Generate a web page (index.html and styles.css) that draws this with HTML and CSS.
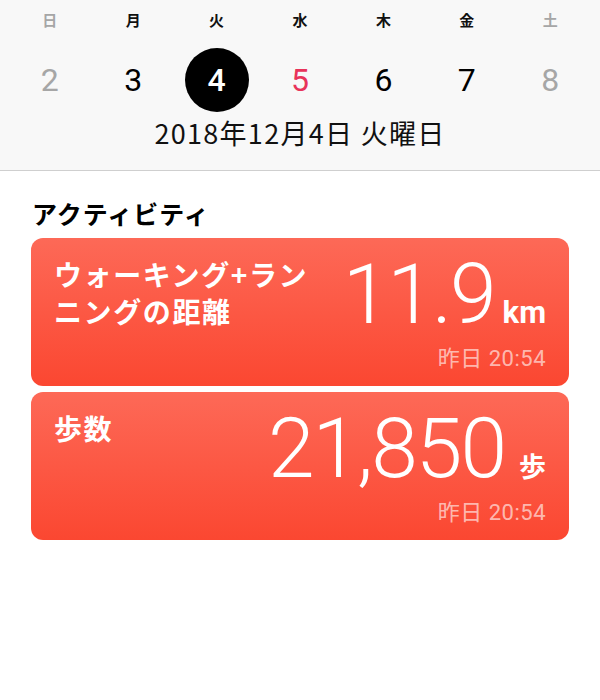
FILE: index.html
```html
<!DOCTYPE html>
<html lang="ja">
<head>
<meta charset="utf-8">
<link rel="stylesheet" href="styles.css">
</head>
<body>
<header class="calendar">
  <div class="week">
    <div class="day off"><span class="dow">日</span><span class="num">2</span></div>
    <div class="day"><span class="dow">月</span><span class="num">3</span></div>
    <div class="day"><span class="dow">火</span><span class="num sel">4</span></div>
    <div class="day"><span class="dow">水</span><span class="num today">5</span></div>
    <div class="day"><span class="dow">木</span><span class="num">6</span></div>
    <div class="day"><span class="dow">金</span><span class="num">7</span></div>
    <div class="day off"><span class="dow">土</span><span class="num">8</span></div>
  </div>
  <div class="fulldate">2018年12月4日 火曜日</div>
</header>
<main class="content">
  <h2 class="section">アクティビティ</h2>
  <div class="card">
    <div class="card-top">
      <div class="title">ウォーキング+ラン<br>ニングの距離</div>
      <div class="value"><span class="big">11.9</span><span class="unit">km</span></div>
    </div>
    <div class="time">昨日 20:54</div>
  </div>
  <div class="card">
    <div class="card-top">
      <div class="title">歩数</div>
      <div class="value"><span class="big">21,850</span><span class="unit ja">歩</span></div>
    </div>
    <div class="time">昨日 20:54</div>
  </div>
</main>
</body>
</html>
```
FILE: styles.css
```css
* { box-sizing: border-box; margin: 0; padding: 0; }
body {
  width: 600px;
  height: 700px;
  background: #ffffff;
  font-family: "Noto Sans CJK JP", sans-serif;
  color: #000;
  overflow: hidden;
}
.calendar {
  background: #f8f8f8;
  height: 171px;
  border-bottom: 1px solid #cfcfcf;
  padding: 7px 8px 0;
}
.week {
  display: grid;
  grid-template-columns: repeat(7, 1fr);
}
.day {
  display: flex;
  flex-direction: column;
  align-items: center;
}
.dow {
  font-size: 15px;
  font-weight: 700;
  line-height: 26px;
  color: #111;
}
.num {
  margin-top: 15px;
  width: 64px;
  height: 64px;
  border-radius: 50%;
  display: flex;
  align-items: center;
  justify-content: center;
  font-family: Roboto, "Noto Sans CJK JP", sans-serif;
  font-size: 32px;
  color: #000;
}
.num.sel { background: #000; color: #fff; font-weight: 500; }
.num.today { color: #e8335a; }
.off .dow, .off .num { color: #a6a6a6; }
.fulldate {
  text-align: center;
  font-size: 27px;
  line-height: 34px;
  letter-spacing: 1.3px;
  margin-top: 4px;
  color: #111;
}
.content { padding: 0 31px; }
.section {
  font-size: 25px;
  font-weight: 700;
  line-height: 32px;
  letter-spacing: 1px;
  margin-top: 26px;
  margin-left: 1px;
  margin-bottom: 9px;
}
.card {
  height: 148px;
  border-radius: 12px;
  background: linear-gradient(#fd6957, #fb4731);
  color: #fff;
  padding: 18px 23px 0 23px;
  margin-bottom: 6px;
  display: flex;
  flex-direction: column;
}
.card-top {
  display: flex;
  justify-content: space-between;
  align-items: flex-start;
}
.title {
  font-size: 28px;
  font-weight: 600;
  line-height: 37px;
  letter-spacing: 1.6px;
}
.value {
  display: flex;
  align-items: baseline;
  font-family: Roboto, sans-serif;
  margin-top: -6px;
}
.big {
  font-size: 84px;
  font-weight: 300;
  line-height: 90px;
  letter-spacing: -2px;
}
.unit {
  font-size: 31px;
  font-weight: 700;
  margin-left: 8px;
}
.unit.ja { font-family: "Noto Sans CJK JP", sans-serif; font-size: 27px; margin-left: 14px; }
.time {
  margin-top: auto;
  margin-bottom: 20px;
  align-self: flex-end;
  font-family: Roboto, "Noto Sans CJK JP", sans-serif;
  font-size: 22px;
  letter-spacing: 0.5px;
  color: rgba(255, 255, 255, 0.62);
}
```
